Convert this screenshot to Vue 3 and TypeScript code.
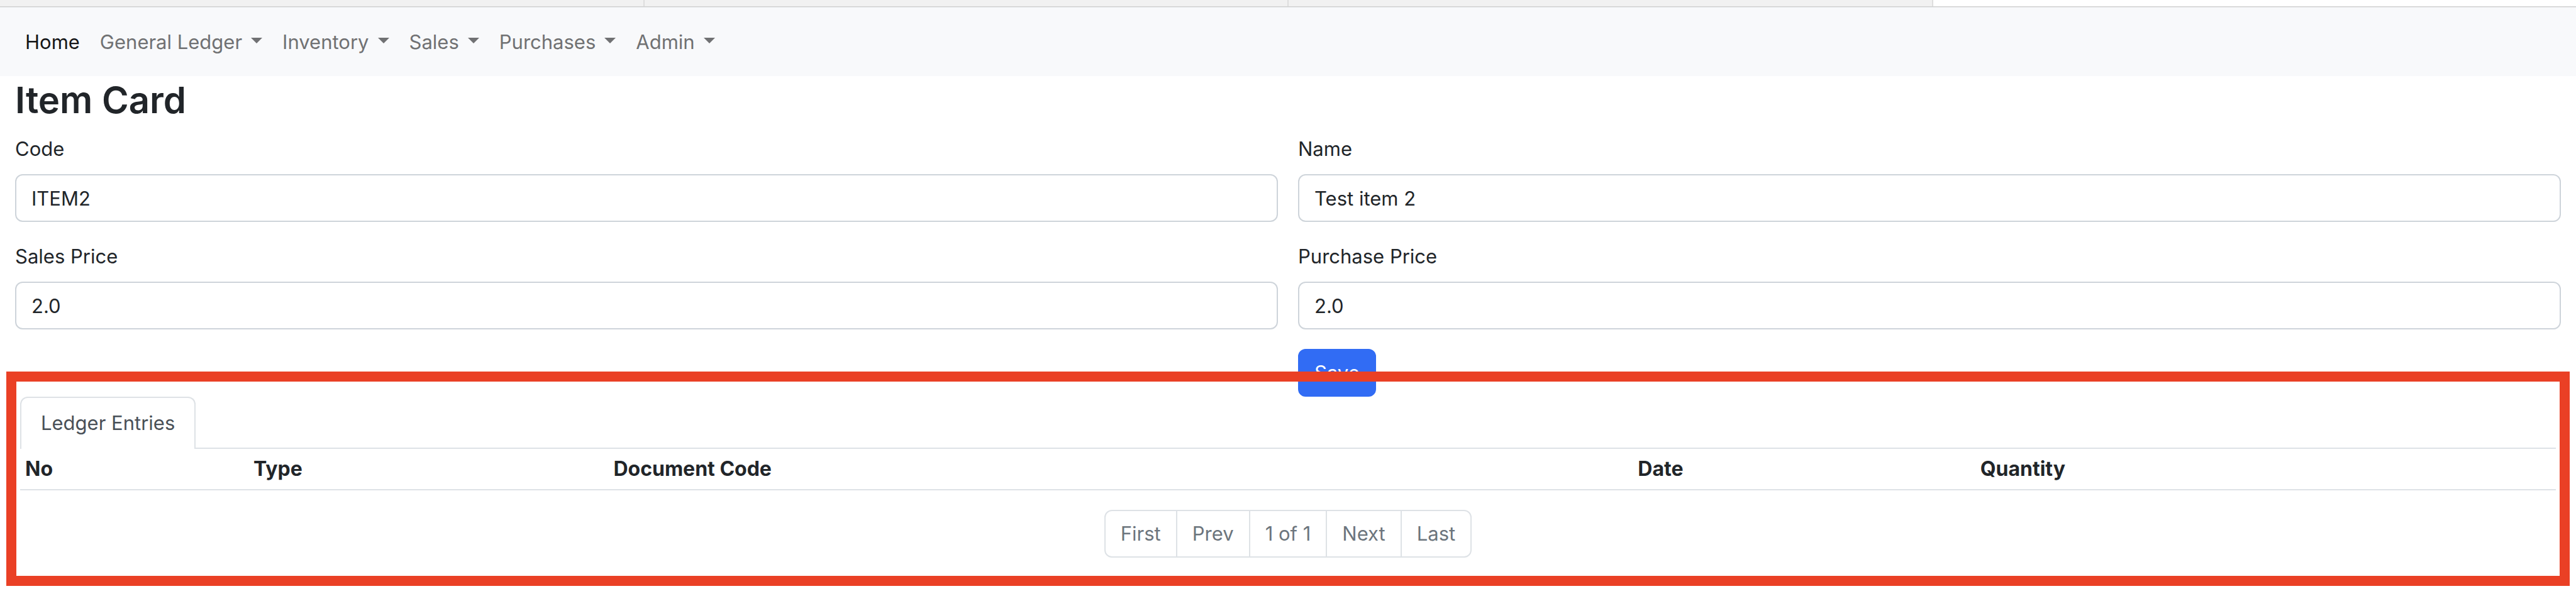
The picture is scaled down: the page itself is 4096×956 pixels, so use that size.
<script setup lang="ts">
import { reactive } from 'vue'

interface NavEntry {
  label: string
  active?: boolean
  dropdown?: boolean
}

const navEntries: NavEntry[] = [
  { label: 'Home', active: true },
  { label: 'General Ledger', dropdown: true },
  { label: 'Inventory', dropdown: true },
  { label: 'Sales', dropdown: true },
  { label: 'Purchases', dropdown: true },
  { label: 'Admin', dropdown: true },
]

const item = reactive({
  code: 'ITEM2',
  name: 'Test item 2',
  salesPrice: '2.0',
  purchasePrice: '2.0',
})

const columns = [
  { label: 'No', key: 'no' },
  { label: 'Type', key: 'type' },
  { label: 'Document Code', key: 'document' },
  { label: 'Date', key: 'date' },
  { label: 'Quantity', key: 'quantity' },
]
</script>

<template>
  <div class="page">
    <div class="tab-strip" aria-hidden="true">
      <span v-for="n in 4" :key="n" class="strip-tab" :class="{ current: n === 4 }"></span>
    </div>

    <nav class="navbar">
      <a
        v-for="entry in navEntries"
        :key="entry.label"
        href="#"
        class="nav-link"
        :class="{ active: entry.active }"
      >{{ entry.label }}<span v-if="entry.dropdown" class="caret"></span></a>
    </nav>

    <main class="content">
      <h1>Item Card</h1>
      <form class="form" @submit.prevent>
        <div class="field">
          <label for="code">Code</label>
          <input id="code" v-model="item.code" type="text" />
        </div>
        <div class="field">
          <label for="name">Name</label>
          <input id="name" v-model="item.name" type="text" />
        </div>
        <div class="field">
          <label for="sales-price">Sales Price</label>
          <input id="sales-price" v-model="item.salesPrice" type="text" />
        </div>
        <div class="field">
          <label for="purchase-price">Purchase Price</label>
          <input id="purchase-price" v-model="item.purchasePrice" type="text" />
        </div>
        <div class="actions">
          <button type="submit" class="save">Save</button>
        </div>
      </form>

      <section class="ledger">
        <div class="tabs" role="tablist">
          <button type="button" role="tab" aria-selected="true" class="tab">Ledger Entries</button>
          <span class="tabs-line"></span>
        </div>
        <table>
          <thead>
            <tr>
              <th v-for="col in columns" :key="col.key" scope="col" :class="col.key">{{ col.label }}</th>
            </tr>
          </thead>
        </table>
        <div class="pagination">
          <button type="button" class="page-item">First</button>
          <button type="button" class="page-item">Prev</button>
          <span class="page-item">1 of 1</span>
          <button type="button" class="page-item">Next</button>
          <button type="button" class="page-item">Last</button>
        </div>
        <div class="highlight"></div>
      </section>
    </main>
  </div>
</template>

<style>
body {
  background: #fff;
}
</style>

<style scoped>
.page {
  font-family: Inter, "Liberation Sans", sans-serif;
  font-size: 31px;
  line-height: 48px;
  color: #212529;
}

.tab-strip {
  display: flex;
  height: 10px;
  border-bottom: 1px solid #cfcfcf;
  background: #f1f1f1;
}

.strip-tab {
  flex: 1;
}

.strip-tab + .strip-tab {
  border-left: 2px solid #dedede;
}

.strip-tab.current {
  background: #fff;
}

.navbar {
  display: flex;
  align-items: center;
  padding: 30px 24px;
  border-top: 1px solid #e3e5e7;
  background: #f8f9fb;
}

.nav-link {
  display: flex;
  align-items: center;
  padding: 0 16px;
  line-height: 49px;
  color: #707173;
  text-decoration: none;
}

.nav-link.active {
  color: #151617;
}

.caret {
  margin: 0 0 4px 14px;
  border-top: 9px solid currentColor;
  border-right: 9px solid transparent;
  border-left: 9px solid transparent;
}

.content {
  padding: 0 24px 68px;
}

h1 {
  margin: 0 0 15px;
  font-size: 58px;
  font-weight: 600;
  line-height: 77px;
}

.form {
  display: grid;
  grid-template-columns: 1fr 1fr;
  gap: 31px 32px;
}

.field {
  display: flex;
  flex-direction: column;
  gap: 16px;
}

input {
  box-sizing: border-box;
  width: 100%;
  height: 76px;
  padding: 12px 24px;
  border: 2px solid #ced4da;
  border-radius: 12px;
  background: #fff;
  color: inherit;
  font: inherit;
}

button {
  background: none;
  font: inherit;
}

.actions {
  grid-column: 2;
}

.save {
  display: block;
  padding: 12px 24px;
  border: 2px solid #316cf4;
  border-radius: 12px;
  background: #316cf4;
  color: #fff;
}

.ledger {
  position: relative;
  padding: 0 8px;
}

.tabs {
  display: flex;
  align-items: flex-end;
}

.tab {
  padding: 16px 31px 17px;
  border: 2px solid #dee2e6;
  border-bottom: 0;
  border-radius: 12px 12px 0 0;
  color: #495057;
}

.tabs-line {
  flex: 1;
  height: 2px;
  background: #dee2e6;
}

table {
  width: 100%;
  border-collapse: separate;
  border-spacing: 0;
  table-layout: fixed;
}

th {
  box-sizing: border-box;
  padding: 8px;
  border-bottom: 2px solid #dee2e6;
  font-size: 32px;
  font-weight: 700;
  text-align: left;
}

.no {
  width: 9%;
}

.type {
  width: 14.2%;
}

.document {
  width: 40.4%;
}

.date {
  width: 13.5%;
}

.pagination {
  display: flex;
  justify-content: center;
  margin-top: 31px;
}

.page-item {
  padding: 12px 24px;
  border: 2px solid #dee2e6;
  color: #6c757d;
}

.page-item + .page-item {
  margin-left: -2px;
}

.page-item:first-child {
  border-radius: 12px 0 0 12px;
}

.page-item:last-child {
  border-radius: 0 12px 12px 0;
}

.highlight {
  position: absolute;
  inset: -40px -14px -45px;
  border: 16px solid #ea4025;
  pointer-events: none;
}
</style>
